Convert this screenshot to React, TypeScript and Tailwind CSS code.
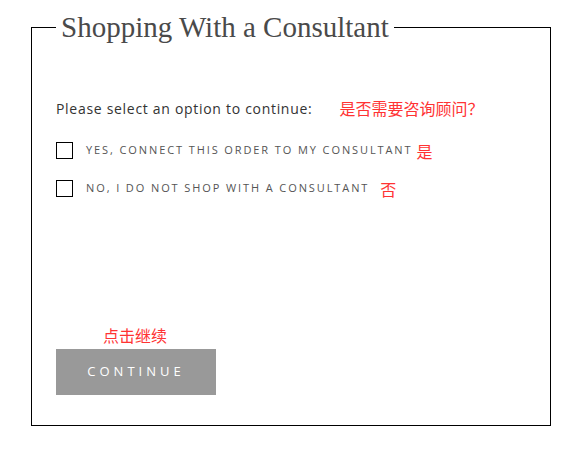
export default function App() {
  return (
    <div className="h-[452px] w-[575px] bg-white pl-[31px] pt-[12px]">
      <fieldset className="h-[414px] w-[520px] border border-black px-[24px] pb-0 pt-0">
        <legend className="px-[5px] font-['Liberation_Serif',serif] text-[29px] leading-[30px] text-[#4a4a4a]">
          Shopping With a Consultant
        </legend>

        <div className="mt-[56px] flex h-[20px] items-center font-['Open_Sans',sans-serif] text-[14px] tracking-[0.7px] text-[#333]">
          <span>Please select an option to continue:</span>
          <span className="ml-[27px] font-['Noto_Sans_CJK_SC',sans-serif] text-[16px] tracking-normal text-[#ff3333]">
            是否需要咨询顾问？
          </span>
        </div>

        <div className="mt-[24px] flex flex-col gap-[21px] font-['Open_Sans',sans-serif] text-[11px] uppercase tracking-[1.9px] text-[#555]">
          <label className="flex h-[17px] items-center">
            <span className="h-[17px] w-[17px] border border-black" />
            <span className="ml-[13px]">Yes, connect this order to my consultant</span>
            <span className="ml-[4px] font-['Noto_Sans_CJK_SC',sans-serif] text-[16px] tracking-normal text-[#ff3333]">是</span>
          </label>
          <label className="flex h-[17px] items-center">
            <span className="h-[17px] w-[17px] border border-black" />
            <span className="ml-[13px]">No, I do not shop with a consultant</span>
            <span className="ml-[11px] font-['Noto_Sans_CJK_SC',sans-serif] text-[16px] tracking-normal text-[#ff3333]">否</span>
          </label>
        </div>

        <div className="mt-[128px] pl-[47px] font-['Noto_Sans_CJK_SC',sans-serif] text-[16px] leading-[20px] text-[#ff3333]">
          点击继续
        </div>
        <button className="mt-[4px] h-[46px] w-[160px] bg-[#999] font-['Open_Sans',sans-serif] text-[13px] uppercase tracking-[4px] text-white">
          Continue
        </button>
      </fieldset>
    </div>
  )
}
